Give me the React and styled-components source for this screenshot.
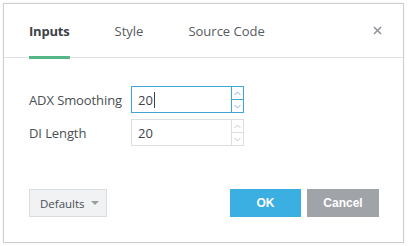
import React from 'react'
import styled, { createGlobalStyle } from 'styled-components'

const GlobalStyle = createGlobalStyle`
  html, body {
    margin: 0;
    background: #ffffff;
  }
  body {
    font-family: 'Open Sans', 'Noto Sans', sans-serif;
    color: #4a4a4a;
  }
`

const Page = styled.div`
  padding: 3px;
`

const Dialog = styled.div`
  background: #ffffff;
  border: 1px solid #cfcfcf;
  box-shadow: 0 0 2px rgba(0, 0, 0, 0.08);
  box-sizing: border-box;
  display: flex;
  flex-direction: column;
  height: 240px;
  width: 401px;
`

const Header = styled.div`
  align-items: stretch;
  border-bottom: 1px solid #e0e3e6;
  display: flex;
  height: 53px;
  padding: 0 20px 0 25px;
  position: relative;
`

const Tab = styled.div`
  align-items: center;
  color: ${p => (p.active ? '#3e4348' : '#565b60')};
  display: flex;
  font-size: 13px;
  font-weight: ${p => (p.active ? 700 : 400)};
  letter-spacing: ${p => (p.active ? '-0.2px' : '0')};
  margin-right: 45px;
  padding-top: 1px;
  position: relative;

  &::after {
    background: #56b786;
    bottom: -2px;
    content: '';
    display: ${p => (p.active ? 'block' : 'none')};
    height: 3px;
    left: 0;
    position: absolute;
    right: 0;
  }
`

const Close = styled.button`
  background: none;
  border: none;
  color: #8e9196;
  cursor: pointer;
  padding: 0;
  position: absolute;
  right: 21px;
  top: 19px;
`

const Body = styled.div`
  display: flex;
  flex: 1;
  flex-direction: column;
  gap: 6px;
  padding: 28px 25px 0;
`

const Row = styled.div`
  align-items: center;
  display: flex;
`

const Label = styled.label`
  color: #4a4f54;
  font-size: 13px;
  letter-spacing: -0.1px;
  width: 102px;
`

const Field = styled.div`
  border: 1px solid ${p => (p.focused ? '#3fa5d3' : '#dcdfe2')};
  box-sizing: border-box;
  display: flex;
  height: 27px;
  width: 113px;
`

const Value = styled.div`
  align-items: center;
  color: #3e4348;
  display: flex;
  flex: 1;
  font-size: 13px;
  padding-left: 6px;
`

const Caret = styled.span`
  background: #3e4348;
  display: inline-block;
  height: 16px;
  margin-left: 1px;
  width: 1px;
`

const Spinner = styled.div`
  border-left: 1px solid ${p => (p.focused ? '#3fa5d3' : '#dcdfe2')};
  display: flex;
  flex-direction: column;
  width: 11px;
`

const SpinBtn = styled.div`
  align-items: center;
  border-top: ${p => (p.bottom ? `1px solid ${p.focused ? '#3fa5d3' : '#dcdfe2'}` : 'none')};
  color: ${p => (p.focused ? '#7db9d6' : '#c4c7ca')};
  display: flex;
  flex: 1;
  justify-content: center;
`

const Footer = styled.div`
  align-items: center;
  display: flex;
  padding: 0 24px 25px 25px;
`

const DefaultsButton = styled.button`
  align-items: center;
  background: #f1f2f4;
  border: 1px solid #dadde0;
  color: #4a4f54;
  display: flex;
  font-family: 'Open Sans', sans-serif;
  font-size: 11.5px;
  gap: 6px;
  height: 28px;
  padding: 0 7px 0 10px;
`

const Spacer = styled.div`
  flex: 1;
`

const ActionButton = styled.button`
  background: ${p => (p.primary ? '#3baee2' : '#a0a3a8')};
  border: none;
  color: #ffffff;
  font-family: 'Liberation Sans', Arial, sans-serif;
  font-size: 12px;
  font-weight: 700;
  height: 28px;
  margin-left: ${p => (p.primary ? '0' : '6px')};
  width: ${p => (p.primary ? '71px' : '72px')};
`

const Chevron = ({ up }) => (
  <svg width="7" height="5" viewBox="0 0 7 5" fill="none" stroke="currentColor" strokeWidth="1">
    <path d={up ? 'M0.5 4 L3.5 1 L6.5 4' : 'M0.5 1 L3.5 4 L6.5 1'} />
  </svg>
)

const NumberField = ({ value, focused }) => (
  <Field focused={focused}>
    <Value>
      {value}
      {focused && <Caret />}
    </Value>
    <Spinner focused={focused}>
      <SpinBtn focused={focused}><Chevron up /></SpinBtn>
      <SpinBtn focused={focused} bottom><Chevron /></SpinBtn>
    </Spinner>
  </Field>
)

const App = () => (
  <Page>
    <GlobalStyle />
    <Dialog>
      <Header>
        <Tab active>Inputs</Tab>
        <Tab>Style</Tab>
        <Tab>Source Code</Tab>
        <Close>
          <svg width="9" height="9" viewBox="0 0 9 9" stroke="currentColor" strokeWidth="1.5">
            <path d="M1 1 L8 8 M8 1 L1 8" />
          </svg>
        </Close>
      </Header>
      <Body>
        <Row>
          <Label>ADX Smoothing</Label>
          <NumberField value="20" focused />
        </Row>
        <Row>
          <Label>DI Length</Label>
          <NumberField value="20" />
        </Row>
      </Body>
      <Footer>
        <DefaultsButton>
          Defaults
          <svg width="8" height="4" viewBox="0 0 8 4" fill="#9a9da2">
            <path d="M0 0 H8 L4 4 Z" />
          </svg>
        </DefaultsButton>
        <Spacer />
        <ActionButton primary>OK</ActionButton>
        <ActionButton>Cancel</ActionButton>
      </Footer>
    </Dialog>
  </Page>
)

export default App
